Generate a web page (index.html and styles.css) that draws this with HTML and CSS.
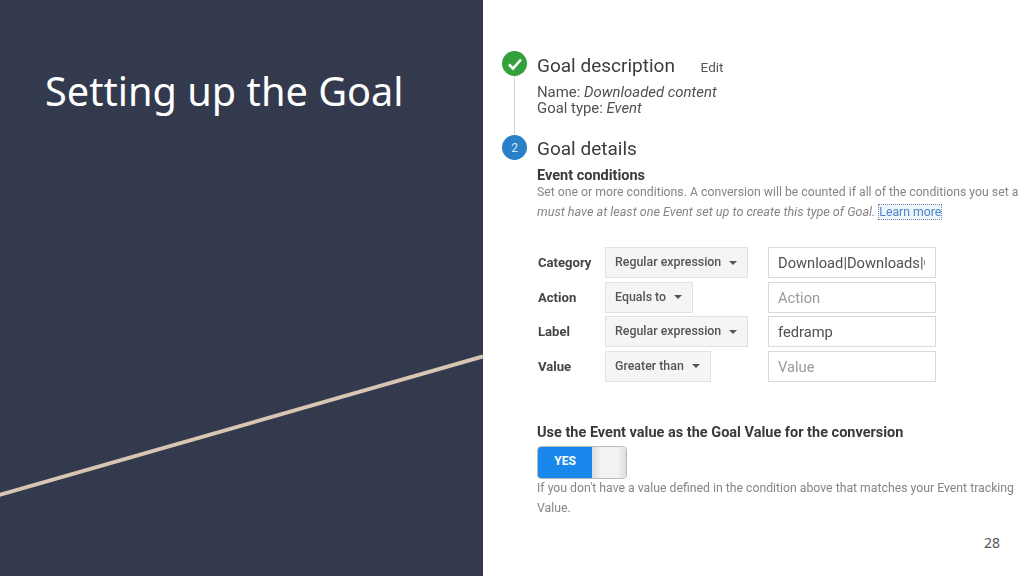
FILE: index.html
```html
<!DOCTYPE html>
<html lang="en">
<head>
    <meta charset="UTF-8">
    <meta name="viewport" content="width=device-width, initial-scale=1.0">
    <title>Setting up the Goal</title>
    <link rel="stylesheet" href="styles.css">
</head>
<body>
    <div class="slide">
        <div class="side-panel">
            <h1>Setting up the Goal</h1>
            <svg class="divider" width="483" height="576" viewBox="0 0 483 576">
                <line x1="-1" y1="495" x2="483" y2="356.5" stroke="#d9c6b2" stroke-width="4"></line>
            </svg>
        </div>
        <div class="content">
            <div class="capture">
                <div class="step step-done">
                    <div class="step-marker">
                        <div class="circle circle-done">
                            <svg width="16" height="14" viewBox="0 0 16 14"><path d="M2 7.5 L6 11.5 L14 2.5" fill="none" stroke="#fff" stroke-width="2.6"></path></svg>
                        </div>
                        <div class="step-line"></div>
                    </div>
                    <div class="step-body">
                        <div class="step-title">Goal description <span class="edit">Edit</span></div>
                        <div class="step-info">Name: <em>Downloaded content</em></div>
                        <div class="step-info">Goal type: <em>Event</em></div>
                    </div>
                </div>
                <div class="step">
                    <div class="step-marker">
                        <div class="circle circle-active">2</div>
                    </div>
                    <div class="step-body">
                        <div class="step-title">Goal details</div>
                        <div class="section-title">Event conditions</div>
                        <div class="hint">Set one or more conditions. A conversion will be counted if all of the conditions you set a</div>
                        <div class="hint hint-second"><em>must have at least one Event set up to create this type of Goal.</em> <a class="learn-more">Learn more</a></div>

                        <div class="conditions">
                            <div class="condition-label">Category</div>
                            <div><div class="select">Regular expression <span class="caret"></span></div></div>
                            <div class="field"><div class="field-text">Download|Downloads|C</div></div>

                            <div class="condition-label">Action</div>
                            <div><div class="select">Equals to <span class="caret"></span></div></div>
                            <div class="field placeholder"><div class="field-text">Action</div></div>

                            <div class="condition-label">Label</div>
                            <div><div class="select">Regular expression <span class="caret"></span></div></div>
                            <div class="field"><div class="field-text">fedramp</div></div>

                            <div class="condition-label">Value</div>
                            <div><div class="select">Greater than <span class="caret"></span></div></div>
                            <div class="field placeholder"><div class="field-text">Value</div></div>
                        </div>

                        <div class="section-title value-title">Use the Event value as the Goal Value for the conversion</div>
                        <div class="toggle">
                            <div class="toggle-on">YES</div>
                            <div class="toggle-off"></div>
                        </div>
                        <div class="hint hint-toggle">If you don't have a value defined in the condition above that matches your Event tracking</div>
                        <div class="hint hint-second">Value.</div>
                    </div>
                </div>
            </div>
            <div class="page-number">28</div>
        </div>
    </div>
</body>
</html>
```

FILE: styles.css
```css
body {
    margin: 0;
    padding: 0;
    background-color: #ffffff;
}

.slide {
    width: 1024px;
    height: 576px;
    display: flex;
    overflow: hidden;
}

.side-panel {
    width: 483px;
    height: 576px;
    flex-shrink: 0;
    background-color: #333a4e;
    position: relative;
    padding: 62px 0 0 45px;
    box-sizing: border-box;
}

.side-panel h1 {
    margin: 0;
    font-family: "Noto Sans", sans-serif;
    font-size: 39.7px;
    font-weight: 400;
    line-height: 58px;
    color: #ffffff;
}

.divider {
    position: absolute;
    top: 0;
    left: 0;
}

.content {
    flex: 1;
    display: flex;
    flex-direction: column;
}

.capture {
    width: 516px;
    margin-left: 19px;
    padding-top: 51px;
    overflow: hidden;
    font-family: Roboto, sans-serif;
    color: #444444;
    filter: blur(0.5px);
}

.step {
    display: flex;
}

.step-marker {
    width: 35px;
    flex-shrink: 0;
    display: flex;
    flex-direction: column;
    align-items: center;
    margin-left: -5px;
    margin-right: 5px;
}

.step-done .step-marker {
    height: 83px;
}

.circle {
    width: 25px;
    height: 25px;
    flex-shrink: 0;
    border-radius: 50%;
    display: flex;
    justify-content: center;
    align-items: center;
    color: #dbe9f7;
    font-size: 12px;
}

.circle-done {
    background-color: #35a13c;
}

.circle-active {
    margin-top: 1px;
    background-color: #2a80c8;
}

.step-line {
    flex: 1;
    width: 1.5px;
    background-color: #d4d4d4;
}

.step-body {
    white-space: nowrap;
    width: 481px;
    overflow: hidden;
}

.step-title {
    padding-top: 1px;
    font-size: 19px;
    line-height: 28px;
    color: #3c3c3c;
}

.edit {
    font-size: 13.5px;
    margin-left: 21px;
    color: #555555;
}

.step-info {
    font-size: 14.9px;
    line-height: 16px;
    color: #505050;
}

.step-title + .step-info {
    margin-top: 3px;
}

.section-title {
    font-size: 14.5px;
    font-weight: 700;
    line-height: 17px;
    margin-top: 4px;
    color: #3a3a3a;
}

.hint {
    font-size: 12.25px;
    line-height: 16px;
    color: #858585;
}

.hint-second {
    margin-top: 4px;
}

.hint-second em {
    font-size: 12.6px;
}

.learn-more {
    color: #4a86c8;
    border: 1px dotted #6a8fb5;
    background-color: #eef4fa;
}

.conditions {
    display: grid;
    grid-template-columns: 68px 163px 168px;
    grid-auto-rows: 31px;
    row-gap: 3.5px;
    margin-top: 27px;
    align-items: center;
}

.condition-label {
    padding-left: 1px;
    font-size: 13.1px;
    font-weight: 700;
    color: #444444;
}

.select {
    display: inline-flex;
    align-items: center;
    height: 31px;
    box-sizing: border-box;
    padding: 0 10px 2px 9px;
    background-color: #f5f5f5;
    border: 1px solid #e2e2e2;
    font-size: 12.4px;
    font-weight: 500;
    color: #555555;
}

.caret {
    width: 0;
    height: 0;
    margin-left: 8px;
    margin-top: 2px;
    border-left: 4px solid transparent;
    border-right: 4px solid transparent;
    border-top: 4px solid #555555;
}

.field {
    height: 31px;
    box-sizing: border-box;
    padding: 0 10px 0 9px;
    border: 1px solid #d9d9d9;
    font-size: 14.7px;
    line-height: 30px;
    color: #505050;
}

.field-text {
    overflow: hidden;
}

.placeholder {
    color: #9a9a9a;
}

.value-title {
    margin-top: 42px;
}

.toggle {
    display: flex;
    width: 90px;
    height: 33px;
    margin-top: 5px;
    box-sizing: border-box;
    border: 1px solid #bbbbbb;
    border-radius: 4px;
    overflow: hidden;
}

.toggle-on {
    width: 54px;
    background-color: #1a87ec;
    color: #ffffff;
    font-size: 12px;
    font-weight: 700;
    line-height: 29px;
    text-align: center;
}

.toggle-off {
    flex: 1;
    background: linear-gradient(to right, #dcdcdc, #f2f2f2 25%, #f2f2f2 75%, #dddddd);
}

.hint-toggle {
    margin-top: 1px;
}

.page-number {
    margin-top: 17px;
    padding-right: 24px;
    text-align: right;
    font-family: "Noto Sans", sans-serif;
    font-size: 14px;
    color: #555555;
}
```
